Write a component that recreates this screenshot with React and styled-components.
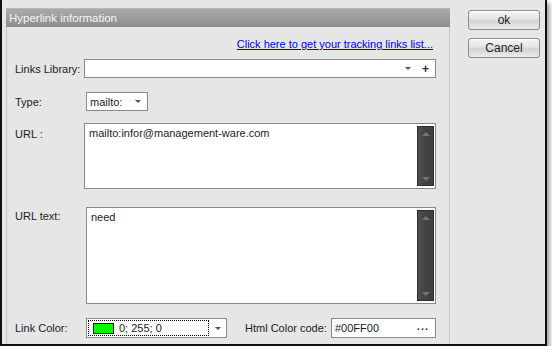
import styled, { createGlobalStyle } from 'styled-components';

const GlobalStyle = createGlobalStyle`
    html, body {
        margin: 0;
        padding: 0;
        background: #ffffff;
    }
    body {
        font-family: 'Liberation Sans', Arial, sans-serif;
        font-size: 11px;
        color: #1c1c1c;
    }
`;

const Window = styled.div`
    box-sizing: border-box;
    width: 547px;
    height: 346px;
    background: #e6e6e6;
    border: 2px solid #111;
    border-top: none;
    box-shadow: 3px 3px 4px rgba(0, 0, 0, 0.35);
    display: flex;
    padding: 8px 0 0 4px;
`;

const Panel = styled.div`
    width: 444px;
    display: flex;
    flex-direction: column;
`;

const TitleBar = styled.div`
    height: 19px;
    line-height: 19px;
    padding-left: 3px;
    color: #f6f6f6;
    font-size: 11.5px;
    background: linear-gradient(#aaaaaa, #8d8d8d);
    border-top: 1px solid #b8b8b8;
    box-sizing: border-box;
`;

const Body = styled.div`
    flex: 1;
    border-left: 1px solid #c6c6c6;
    border-right: 1px solid #c6c6c6;
    padding: 10px 13px 0 8px;
    display: flex;
    flex-direction: column;
`;

const LinkRow = styled.div`
    display: flex;
    justify-content: flex-end;
    height: 14px;
    line-height: 14px;
    padding-right: 3px;
`;

const TrackLink = styled.a`
    color: #0000ee;
    text-decoration: underline;
    cursor: pointer;
`;

const Row = styled.div`
    display: flex;
    align-items: ${(p) => (p.top ? 'flex-start' : 'center')};
    margin-top: ${(p) => p.gap || 0}px;
`;

const Label = styled.div`
    width: ${(p) => p.width || 69}px;
    flex-shrink: 0;
    padding-top: ${(p) => p.offset || 0}px;
    color: #1c1c1c;
`;

const Field = styled.div`
    box-sizing: border-box;
    background: #fff;
    border: 1px solid #8a8a8a;
    height: ${(p) => p.h}px;
    width: ${(p) => (p.w ? `${p.w}px` : 'auto')};
    flex: ${(p) => (p.w ? 'none' : 1)};
    display: flex;
    align-items: ${(p) => (p.multi ? 'flex-start' : 'center')};
    padding: ${(p) => (p.multi ? '2px 1px 2px 4px' : '0 6px 0 3px')};
`;

const Value = styled.span`
    flex: 1;
    white-space: nowrap;
    padding-top: ${(p) => (p.multi ? 1 : 0)}px;
`;

const Caret = styled.span`
    width: 0;
    height: 0;
    border-left: 3px solid transparent;
    border-right: 3px solid transparent;
    border-top: 3px solid #555;
    margin-left: ${(p) => p.ml || 0}px;
`;

const Plus = styled.span`
    font-weight: bold;
    font-size: 12px;
    color: #333;
    margin-left: 11px;
    line-height: 1;
`;

const Scroll = styled.div`
    box-sizing: border-box;
    width: 17px;
    align-self: stretch;
    background: linear-gradient(90deg, #505050, #454545 40%, #3e3e3e);
    border: 1px solid #2c2c2c;
    display: flex;
    flex-direction: column;
    justify-content: space-between;
    align-items: center;
    padding: 5px 0 4px;
`;

const Arrow = styled.span`
    width: 0;
    height: 0;
    border-left: 4px solid transparent;
    border-right: 4px solid transparent;
    ${(p) => (p.up ? 'border-bottom: 4px solid #747474;' : 'border-top: 4px solid #747474;')}
`;

const ColorBox = styled.div`
    box-sizing: border-box;
    width: 141px;
    height: 20px;
    background: #fff;
    border: 1px solid #8a8a8a;
    display: flex;
    align-items: center;
    padding: 1px 5px 1px 1px;
`;

const Focus = styled.div`
    flex: 1;
    align-self: stretch;
    border: 1px dotted #000;
    display: flex;
    align-items: center;
    padding-left: 4px;
    margin-right: 6px;
`;

const Swatch = styled.span`
    width: 19px;
    height: 9px;
    background: ${(p) => p.color};
    border: 1px solid #222;
    margin-right: 5px;
`;

const Dots = styled.span`
    font-weight: bold;
    letter-spacing: 1px;
    color: #333;
    margin-top: -4px;
`;

const Side = styled.div`
    display: flex;
    flex-direction: column;
    gap: 8px;
    padding: 2px 0 0 18px;
`;

const Btn = styled.button`
    width: 72px;
    height: 20px;
    font-family: 'Liberation Sans', Arial, sans-serif;
    font-size: 12px;
    color: #222;
    border: 1px solid #8c8c8c;
    border-radius: 3px;
    background: linear-gradient(#f6f6f6, #e4e4e4 45%, #d2d2d2 55%, #ececec);
    box-shadow: inset 0 1px 0 #fff;
    padding: 0;
`;

const TextArea = ({ h, text }) => (
    <Field h={h} multi>
        <Value multi>{text}</Value>
        <Scroll>
            <Arrow up />
            <Arrow />
        </Scroll>
    </Field>
);

const App = () => {
    return (
        <>
            <GlobalStyle />
            <Window>
                <Panel>
                    <TitleBar>Hyperlink information</TitleBar>
                    <Body>
                        <LinkRow>
                            <TrackLink>Click here to get your tracking links list...</TrackLink>
                        </LinkRow>

                        {/* links library */}
                        <Row gap={8}>
                            <Label>Links Library:</Label>
                            <Field h={19}>
                                <Value />
                                <Caret />
                                <Plus>+</Plus>
                            </Field>
                        </Row>

                        <Row gap={14}>
                            <Label width={71}>Type:</Label>
                            <Field h={19} w={62}>
                                <Value>mailto:</Value>
                                <Caret />
                            </Field>
                        </Row>

                        <Row gap={12} top>
                            <Label offset={5}>URL :</Label>
                            <TextArea h={66} text="mailto:infor@management-ware.com" />
                        </Row>

                        <Row gap={18} top>
                            <Label width={71} offset={3}>URL text:</Label>
                            <TextArea h={97} text="need" />
                        </Row>

                        <Row gap={14}>
                            <Label width={71}>Link Color:</Label>
                            <ColorBox>
                                <Focus>
                                    <Swatch color="#00ff00" />
                                    0; 255; 0
                                </Focus>
                                <Caret />
                            </ColorBox>
                            <Label width={86} style={{ marginLeft: 18 }}>Html Color code:</Label>
                            <Field h={20}>
                                <Value>#00FF00</Value>
                                <Dots>...</Dots>
                            </Field>
                        </Row>
                    </Body>
                </Panel>
                <Side>
                    <Btn>ok</Btn>
                    <Btn>Cancel</Btn>
                </Side>
            </Window>
        </>
    );
};

export default App;
